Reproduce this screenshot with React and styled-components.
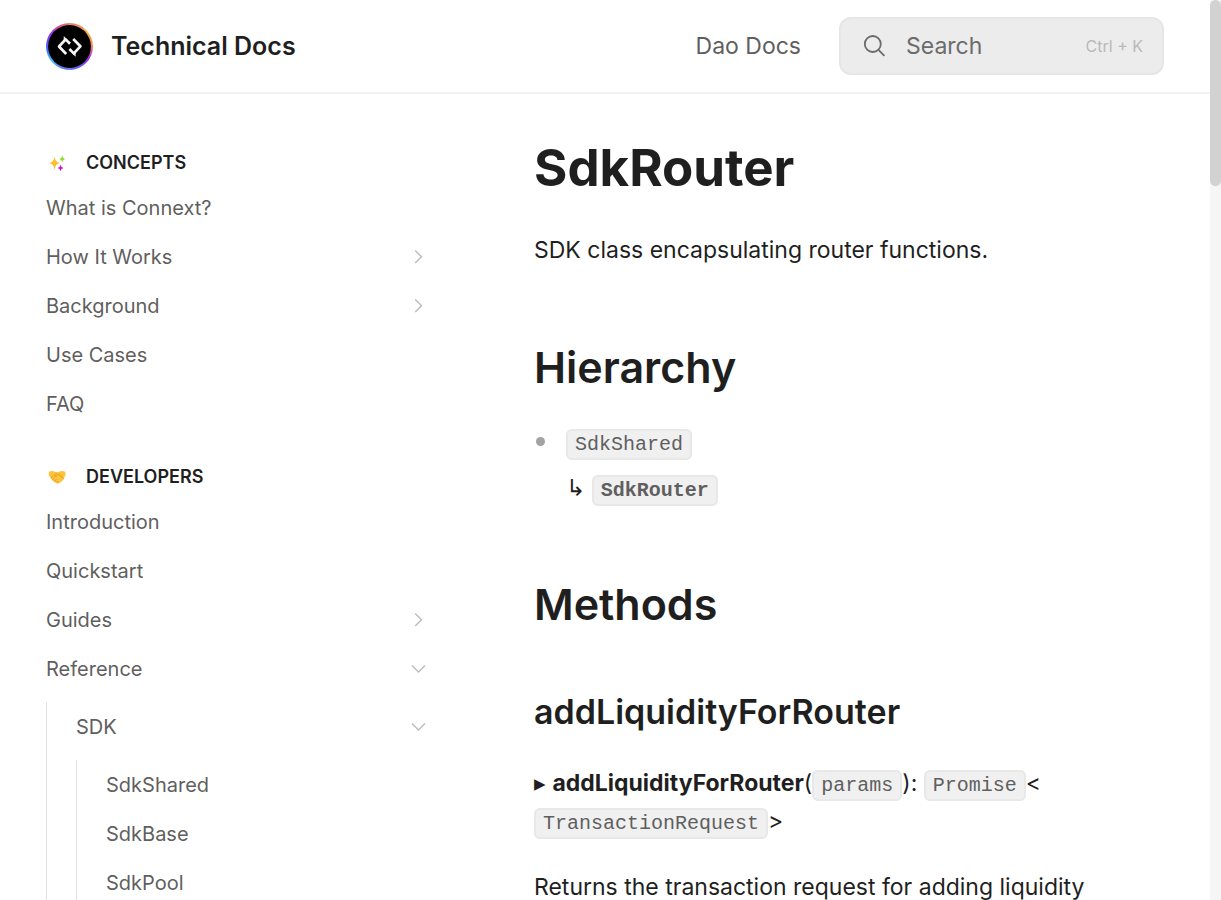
import React from "react";
import styled, { createGlobalStyle } from "styled-components";

const GlobalStyle = createGlobalStyle`
  * { box-sizing: border-box; }
  body {
    margin: 0;
    background: #fff;
    color: #1f1f1f;
    font-family: Inter, "Liberation Sans", sans-serif;
    font-size: 23px;
  }
  h1, h2, h3, p, ul { margin: 0; padding: 0; }
  ul { list-style: none; }
  a { color: inherit; text-decoration: none; }
`;

const Shell = styled.div`
  display: flex;
  height: 100vh;
  overflow: hidden;
`;

const Page = styled.div`
  flex: 1;
  min-width: 0;
`;

const Scrollbar = styled.div`
  width: 11px;
  background: #f6f6f6;
`;

const Thumb = styled.div`
  height: 186px;
  border-radius: 6px;
  background: #d2d2d2;
`;

const Header = styled.header`
  display: flex;
  align-items: center;
  justify-content: space-between;
  height: 94px;
  padding: 0 46px;
  border-bottom: 2px solid #f3f3f3;
`;

const Brand = styled.a`
  display: flex;
  align-items: center;
  gap: 18px;
  font-size: 25px;
  font-weight: 600;
`;

const HeaderNav = styled.nav`
  display: flex;
  align-items: center;
  gap: 38px;
  color: #5f5f5f;
`;

const SearchButton = styled.button`
  display: flex;
  align-items: center;
  width: 325px;
  height: 58px;
  padding: 0 19px 0 22px;
  border: 2px solid #e6e6e6;
  border-radius: 12px;
  background: #ececec;
  color: #6b6b6b;
  font: inherit;
`;

const SearchLabel = styled.span`
  margin-left: 19px;
`;

const Shortcut = styled.kbd`
  margin-left: auto;
  color: #b9b9b9;
  font-family: inherit;
  font-size: 16px;
`;

const Columns = styled.div`
  display: flex;
  gap: 106px;
  padding: 0 46px;
`;

const Sidebar = styled.nav`
  flex: 0 0 382px;
  display: flex;
  flex-direction: column;
  gap: 28px;
  padding-top: 48px;
`;

const GroupTitle = styled.h2`
  display: flex;
  align-items: center;
  gap: 16px;
  height: 41px;
  font-size: 18px;
  font-weight: 600;
`;

const NavLink = styled.a`
  display: flex;
  align-items: center;
  justify-content: space-between;
  height: 49px;
  color: #5f5f5f;
  font-size: 20px;
`;

const SubList = styled.ul`
  margin-top: 9px;
  padding-left: 29px;
  border-left: 1px solid #e0e0e0;
`;

const Article = styled.main`
  flex: 1;
  min-width: 0;
  padding-top: 42px;
`;

const Title = styled.h1`
  font-size: 51px;
  line-height: 64px;
  font-weight: 700;
`;

const SectionTitle = styled.h2`
  margin-top: ${(p) => p.$top}px;
  font-size: 43px;
  line-height: 60px;
  font-weight: 600;
`;

const MethodTitle = styled.h3`
  margin: 54px 0 28px;
  font-size: 34px;
  line-height: 48px;
  font-weight: 600;
`;

const Paragraph = styled.p`
  margin-top: ${(p) => p.$top || 0}px;
  line-height: 38px;
`;

const Code = styled.code`
  padding: 2px 7px;
  border: 2px solid #e8e8e8;
  border-radius: 6px;
  background: #f0f0f0;
  color: #5f5f5f;
  font-family: "Liberation Mono", monospace;
  font-size: 20px;
  line-height: 1;
`;

const Arrow = styled.span`
  font-family: "DejaVu Sans", sans-serif;
  line-height: 1;
`;

const Hierarchy = styled.ul`
  margin-top: 22px;
`;

const HierarchyItem = styled.li`
  display: flex;
  align-items: flex-start;
  gap: 21px;
  line-height: 46px;
`;

const Bullet = styled.span`
  width: 9px;
  height: 9px;
  margin: 18px 0 0 2px;
  border-radius: 50%;
  background: #a3a3a3;
`;

function Logo() {
  return (
    <svg width="47" height="47" viewBox="0 0 47 47" aria-hidden="true">
      <defs>
        <linearGradient id="ringLeft" x1="0" y1="0" x2="0" y2="1">
          <stop offset="0" stopColor="#e8776a" />
          <stop offset="0.22" stopColor="#9a2be8" />
          <stop offset="0.55" stopColor="#4169f5" />
          <stop offset="0.8" stopColor="#4dbdf0" />
          <stop offset="1" stopColor="#5a6df0" />
        </linearGradient>
        <linearGradient id="ringRight" x1="0" y1="0" x2="0" y2="1">
          <stop offset="0" stopColor="#e8776a" />
          <stop offset="0.2" stopColor="#f6b24e" />
          <stop offset="0.5" stopColor="#e88760" />
          <stop offset="0.75" stopColor="#9a2be8" />
          <stop offset="1" stopColor="#5a6df0" />
        </linearGradient>
      </defs>
      <path d="M23.5 0a23.5 23.5 0 0 0 0 47z" fill="url(#ringLeft)" />
      <path d="M23.5 0a23.5 23.5 0 0 1 0 47z" fill="url(#ringRight)" />
      <circle cx="23.5" cy="23.5" r="21.4" fill="#000" />
      <g fill="none" stroke="#f4f4f4" strokeWidth="2.7" strokeLinejoin="round">
        <path d="M20.2 31L13 23.5L19.6 16.4L24 20.8" />
        <path d="M27.2 16L34.4 23.3L27.8 30.4L23.4 26" />
      </g>
      <path d="M17.8 13L21.5 17L17.6 18.8zM29.6 33.8L25.9 30L29.8 28z" fill="#f4f4f4" />
    </svg>
  );
}

function SearchIcon() {
  return (
    <svg width="24" height="24" viewBox="0 0 24 24" fill="none" stroke="#6b6b6b" strokeWidth="1.8" aria-hidden="true">
      <circle cx="9.8" cy="10" r="8" />
      <path d="M15.5 15.8L21.4 21.8" />
    </svg>
  );
}

function Chevron({ open }) {
  return (
    <svg width="18" height="18" viewBox="0 0 18 18" fill="none" stroke="#bdbdbd" strokeWidth="1.5" aria-hidden="true">
      <path d={open ? "M2 5.5L8.5 12L15 5.5" : "M5.2 2.5L11.5 8.8L5.2 15"} />
    </svg>
  );
}

function Sparkles() {
  return (
    <svg width="24" height="20" viewBox="0 0 24 20" aria-hidden="true">
      <path d="M8.5 3.5Q9.2 9.4 14 10Q9.2 10.7 8.5 17Q7.8 10.7 3.3 10Q7.8 9.4 8.5 3.5z" fill="#fdbf2d" />
      <path d="M16.2 2.7Q16.6 5.6 19.3 6Q16.6 6.4 16.2 9.2Q15.8 6.4 13.3 6Q15.8 5.6 16.2 2.7z" fill="#8bdc22" />
      <path d="M14.5 11.8Q15 14.5 17.5 15Q15 15.5 14.5 18.3Q14 15.5 11.7 15Q14 14.5 14.5 11.8z" fill="#c71bc5" />
    </svg>
  );
}

function Handshake() {
  return (
    <svg width="24" height="20" viewBox="0 0 24 20" aria-hidden="true">
      <path d="M3 4.8Q6 3.2 9 4.8L11.3 5.5Q15 2.8 19.3 4.8Q20.2 8 18.5 10L17.6 12.5Q16 14 14.5 15.3Q12.5 17 10.5 16.2L7.2 14.3L3.9 10.2Q2.2 8 3 4.8z" fill="#fcc43a" />
      <path d="M9.3 9.3Q10.8 8.8 12.3 7L17.6 11.5M4.8 10.8l2-1.5M6.3 13l2.4-2.3M8.4 14.8l2-2.2M10.8 15.8l1.4-1.8M11.3 5.5L8.5 8Q8 9.6 9.8 9.2" fill="none" stroke="#e58b25" strokeWidth="0.8" />
    </svg>
  );
}

const groups = [
  {
    title: "CONCEPTS",
    icon: <Sparkles />,
    items: [
      { label: "What is Connext?" },
      { label: "How It Works", expandable: true },
      { label: "Background", expandable: true },
      { label: "Use Cases" },
      { label: "FAQ" },
    ],
  },
  {
    title: "DEVELOPERS",
    icon: <Handshake />,
    items: [
      { label: "Introduction" },
      { label: "Quickstart" },
      { label: "Guides", expandable: true },
      {
        label: "Reference",
        items: [
          { label: "SDK", items: [{ label: "SdkShared" }, { label: "SdkBase" }, { label: "SdkPool" }] },
        ],
      },
    ],
  },
];

function NavItem({ item }) {
  return (
    <li>
      <NavLink href="#">
        {item.label}
        {(item.items || item.expandable) && <Chevron open={Boolean(item.items)} />}
      </NavLink>
      {item.items && (
        <SubList>
          {item.items.map((child) => <NavItem key={child.label} item={child} />)}
        </SubList>
      )}
    </li>
  );
}

export default function App() {
  return (
    <>
      <GlobalStyle />
      <Shell>
        <Page>
          <Header>
            <Brand href="#"><Logo />Technical Docs</Brand>
            <HeaderNav>
              <a href="#">Dao Docs</a>
              <SearchButton type="button">
                <SearchIcon />
                <SearchLabel>Search</SearchLabel>
                <Shortcut>Ctrl + K</Shortcut>
              </SearchButton>
            </HeaderNav>
          </Header>
          <Columns>
            <Sidebar aria-label="Documentation">
              {groups.map((group) => (
                <section key={group.title}>
                  <GroupTitle>{group.icon}{group.title}</GroupTitle>
                  <ul>
                    {group.items.map((item) => <NavItem key={item.label} item={item} />)}
                  </ul>
                </section>
              ))}
            </Sidebar>
            <Article>
              <Title>SdkRouter</Title>
              <Paragraph $top={31}>SDK class encapsulating router functions.</Paragraph>
              <SectionTitle $top={68}>Hierarchy</SectionTitle>
              <Hierarchy>
                <HierarchyItem>
                  <Bullet />
                  <div>
                    <Code>SdkShared</Code>
                    <br />
                    <Arrow>↳</Arrow> <Code as="strong">SdkRouter</Code>
                  </div>
                </HierarchyItem>
              </Hierarchy>
              <SectionTitle $top={63}>Methods</SectionTitle>
              <MethodTitle>addLiquidityForRouter</MethodTitle>
              <Paragraph>
                ▸ <strong>addLiquidityForRouter</strong>(<Code>params</Code>): <Code>Promise</Code>&lt;
                <wbr />
                <Code>TransactionRequest</Code>&gt;
              </Paragraph>
              <Paragraph $top={28}>Returns the transaction request for adding liquidity</Paragraph>
            </Article>
          </Columns>
        </Page>
        <Scrollbar aria-hidden="true"><Thumb /></Scrollbar>
      </Shell>
    </>
  );
}
